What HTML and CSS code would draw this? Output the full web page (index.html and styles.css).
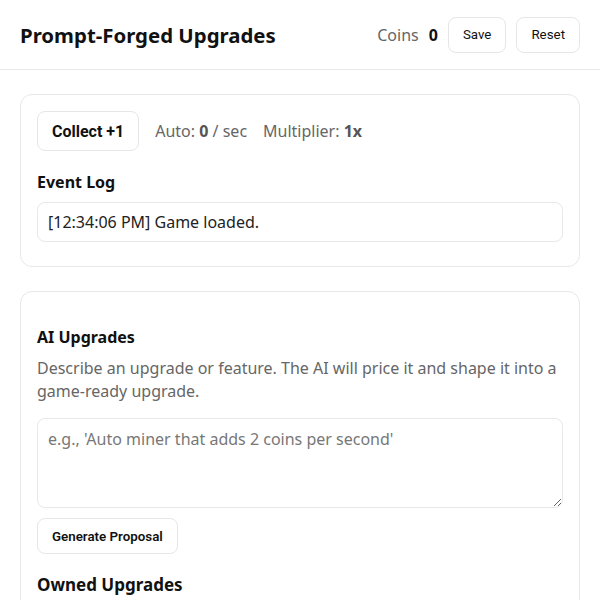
FILE: index.html
```html
<!DOCTYPE html>
<html>
<head>
<meta charset="utf-8">
<link rel="stylesheet" href="styles.css">
</head>
<body>
<header class="topbar">
  <h1 class="title">Prompt-Forged Upgrades</h1>
  <div class="top-right">
    <span class="coins-label">Coins</span>
    <span class="coins-value">0</span>
    <button class="btn">Save</button>
    <button class="btn">Reset</button>
  </div>
</header>
<main class="main">
  <section class="card">
    <div class="collect-row">
      <button class="btn btn-collect">Collect +1</button>
      <span class="stat">Auto: <b>0</b> / sec</span>
      <span class="stat">Multiplier: <b>1x</b></span>
    </div>
    <h2 class="section-title">Event Log</h2>
    <div class="log">[12:34:06 PM] Game loaded.</div>
  </section>
  <section class="card card-ai">
    <h2 class="section-title">AI Upgrades</h2>
    <p class="desc">Describe an upgrade or feature. The AI will price it and shape it into a game-ready upgrade.</p>
    <textarea class="prompt" placeholder="e.g., 'Auto miner that adds 2 coins per second'"></textarea>
    <button class="btn btn-gen">Generate Proposal</button>
    <h2 class="section-title owned">Owned Upgrades</h2>
  </section>
</main>
</body>
</html>
```
FILE: styles.css
```css
* { box-sizing: border-box; }
body {
  margin: 0;
  font-family: "Noto Sans", "Open Sans", sans-serif;
  color: #111;
  background: #fff;
}
.topbar {
  display: flex;
  align-items: center;
  justify-content: space-between;
  height: 70px;
  padding: 0 20px;
  border-bottom: 1px solid #e8e8e8;
}
.title {
  margin: 0;
  font-size: 20.4px;
  font-weight: 700;
}
.top-right {
  display: flex;
  align-items: center;
}
.coins-label {
  color: #666;
  font-size: 16px;
  margin-right: 10px;
}
.coins-value {
  font-weight: 700;
  font-size: 16px;
  margin-right: 10px;
}
.btn {
  font-family: Roboto, sans-serif;
  font-size: 13.33px;
  color: #111;
  background: #fff;
  border: 1px solid #e6e6e6;
  border-radius: 8px;
  height: 36px;
  padding: 0 14px;
  cursor: pointer;
}
.top-right .btn + .btn { margin-left: 10px; }
.main {
  padding: 24px 20px;
  display: flex;
  flex-direction: column;
  gap: 24px;
}
.card {
  border: 1px solid #e8e8e8;
  border-radius: 12px;
  padding: 16px 16px 24px;
}
.collect-row {
  display: flex;
  align-items: center;
  gap: 16px;
}
.btn-collect {
  height: 40px;
  font-size: 16px;
  font-weight: 700;
  padding: 0 14px;
  border-radius: 8px;
}
.stat {
  color: #666;
  font-size: 16px;
}
.stat b { color: #555; }
.section-title {
  font-size: 16px;
  font-weight: 700;
  margin: 20px 0 9px;
}
.log {
  border: 1px solid #e8e8e8;
  border-radius: 8px;
  padding: 7px 10px;
  font-size: 16px;
  line-height: 24px;
  color: #222;
}
.card-ai .section-title:first-child { margin-top: 18px; }
.desc {
  margin: 9px 0 15px;
  color: #666;
  font-size: 16px;
  line-height: 23px;
}
.prompt {
  display: block;
  width: 100%;
  height: 90px;
  border: 1px solid #e8e8e8;
  border-radius: 8px;
  padding: 8px 10px;
  font-family: "Noto Sans", sans-serif;
  font-size: 16px;
  line-height: 24px;
  resize: vertical;
}
.prompt::placeholder { color: #777; }
.btn-gen {
  margin-top: 10px;
  font-weight: 600;
  font-size: 13.33px;
  height: 36px;
  padding: 0 14px;
}
.owned {
  font-size: 17px;
  margin-top: 19px;
}
```
